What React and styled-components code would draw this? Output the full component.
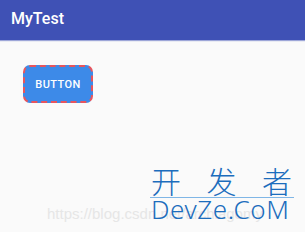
import React from 'react';
import styled, { createGlobalStyle } from 'styled-components';

const Global = createGlobalStyle`
  html, body { margin: 0; padding: 0; background: #fafafa; }
  body { font-family: Roboto, "Noto Sans", sans-serif; }
`;

const Screen = styled.div`
  position: relative;
  width: 305px;
  height: 232px;
  overflow: hidden;
  background: #fafafa;
`;

const AppBar = styled.div`
  height: 40px;
  background: #3f51b5;
  display: flex;
  align-items: center;
  padding-left: 11px;
  box-shadow: 0 1px 1px rgba(63, 81, 181, 0.5);
`;

const Title = styled.h1`
  margin: 0;
  color: #fff;
  font-size: 16px;
  font-weight: 500;
  margin-top: -3px;
`;

const Content = styled.div`
  padding: 25px 0 0 23px;
`;

const DashedButton = styled.button`
  width: 70px;
  height: 38px;
  background: #3d8ae8;
  border: 2px dashed #e8545c;
  border-radius: 7px;
  color: #fff;
  font-family: Roboto, sans-serif;
  font-size: 11px;
  font-weight: 500;
  letter-spacing: 0.4px;
  padding: 0;
`;

const Watermark = styled.div`
  position: absolute;
  left: 150px;
  top: 165px;
  width: 144px;
  color: #1c6dbd;
`;

const Cn = styled.div`
  display: flex;
  justify-content: space-between;
  font-family: "Noto Sans CJK SC", sans-serif;
  font-size: 30px;
  font-weight: 300;
  line-height: 30px;
  padding: 0 2px 2px 1px;
  border-bottom: 1px solid #7fb6e6;
`;

const En = styled.div`
  font-family: "Noto Sans", sans-serif;
  font-size: 26px;
  font-weight: 300;
  line-height: 22px;
  letter-spacing: 0.6px;
  padding-left: 1px;
`;

const Url = styled.div`
  position: absolute;
  left: 47px;
  top: 205px;
  color: #e6e6e6;
  font-family: "Liberation Sans", sans-serif;
  font-size: 15px;
  white-space: nowrap;
`;

export default function App() {
  return (
    <Screen>
      <Global />
      <AppBar>
        <Title>MyTest</Title>
      </AppBar>
      <Content>
        <DashedButton>BUTTON</DashedButton>
      </Content>
      <Url>https://blog.csdn.net/archiagomy</Url>
      <Watermark>
        <Cn><span>开</span><span>发</span><span>者</span></Cn>
        <En>DevZe.CoM</En>
      </Watermark>
    </Screen>
  );
}
